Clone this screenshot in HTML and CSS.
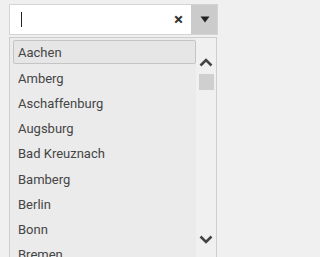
FILE: index.html
```html
<!DOCTYPE html>
<html>
<head>
<meta charset="utf-8">
<link rel="stylesheet" href="styles.css">
</head>
<body>
<div class="combo">
  <div class="field">
    <div class="input"><span class="caret"></span><span class="clear">×</span></div>
    <div class="toggle"><svg width="10" height="7" viewBox="0 0 10 7"><path d="M0.5 0.5 L9.5 0.5 L5 6.5 Z" fill="#222"/></svg></div>
  </div>
  <div class="list">
    <ul class="items">
      <li class="item active">Aachen</li>
      <li class="item">Amberg</li>
      <li class="item">Aschaffenburg</li>
      <li class="item">Augsburg</li>
      <li class="item">Bad Kreuznach</li>
      <li class="item">Bamberg</li>
      <li class="item">Berlin</li>
      <li class="item">Bonn</li>
      <li class="item">Bremen</li>
    </ul>
    <div class="scroll">
      <svg class="up" width="14" height="9" viewBox="0 0 14 9"><path d="M1.5 7.5 L7 2 L12.5 7.5" fill="none" stroke="#444" stroke-width="2.6"/></svg>
      <div class="thumb"></div>
      <div class="spacer"></div>
      <svg class="down" width="14" height="9" viewBox="0 0 14 9"><path d="M1.5 1.5 L7 7 L12.5 1.5" fill="none" stroke="#444" stroke-width="2.6"/></svg>
    </div>
  </div>
</div>
</body>
</html>
```
FILE: styles.css
```css
html, body {
  margin: 0;
  padding: 0;
  background: #f0f0f0;
  height: 257px;
  overflow: hidden;
  font-family: Roboto, "Liberation Sans", sans-serif;
}
.combo {
  margin: 4px 0 0 9px;
  width: 209px;
}
.field {
  display: flex;
  height: 31px;
  border: 1px solid #d4d4d4;
  box-sizing: border-box;
}
.input {
  flex: 1;
  background: #fff;
  display: flex;
  align-items: center;
  padding-left: 11px;
  padding-right: 8px;
}
.caret {
  width: 1px;
  height: 15px;
  background: #222;
}
.clear {
  margin-left: auto;
  font-size: 17px;
  font-weight: bold;
  color: #333;
  line-height: 1;
}
.toggle {
  width: 25px;
  background: #cbcbcb;
  display: flex;
  align-items: center;
  justify-content: center;
  padding-left: 1px;
}
.list {
  margin-top: 2px;
  width: 208px;
  height: 230px;
  border: 1px solid #cdcdcd;
  border-bottom: none;
  box-sizing: border-box;
  background: #ebebeb;
  display: flex;
}
.items {
  list-style: none;
  margin: 0;
  padding: 2px 0 0 3px;
  flex: 1;
}
.item {
  height: 25.2px;
  box-sizing: border-box;
  padding-left: 5px;
  padding-top: 1px;
  display: flex;
  align-items: center;
  font-size: 13px;
  color: #454545;
}
.item.active {
  height: 24px;
  margin-bottom: 1.2px;
  border: 1px solid #c4c4c4;
  border-radius: 2px;
  background: #e6e6e6;
  padding-left: 4px;
}
.scroll {
  width: 20px;
  background: #f0f0f0;
  display: flex;
  flex-direction: column;
  align-items: center;
  padding-top: 20px;
}
.up { margin-bottom: 7px; }
.thumb {
  width: 15px;
  height: 16px;
  background: #cfcfcf;
}
.spacer { flex: 1; }
.down { margin-bottom: 23px; }
```
